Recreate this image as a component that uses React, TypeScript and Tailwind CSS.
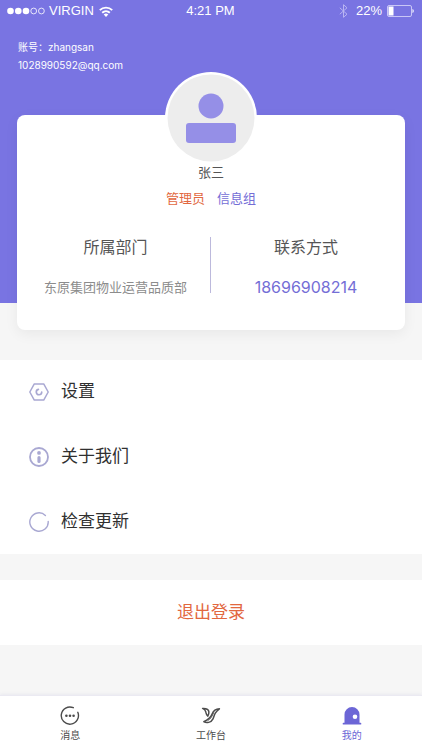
import type { ReactNode } from 'react'

interface MenuEntry {
  label: string
  icon: ReactNode
}

interface TabEntry {
  label: string
  icon: ReactNode
  active?: boolean
}

function SettingsIcon() {
  return (
    <svg viewBox="0 0 20 20" className="size-5" fill="none" stroke="#a9a8d2" strokeWidth="1.5" strokeLinejoin="round" strokeLinecap="round" aria-hidden="true">
      <path d="M5.3 1.9h9.4L19.2 10l-4.5 8.1H5.3L.8 10z" />
      <path d="M9.4 7.4a2.7 2.7 0 1 0 3.3 2.8" strokeWidth="1.7" />
    </svg>
  )
}

function AboutIcon() {
  return (
    <svg viewBox="0 0 20 20" className="size-5" fill="none" stroke="#a9a8d2" aria-hidden="true">
      <circle cx="10" cy="10" r="9" strokeWidth="1.8" />
      <circle cx="10" cy="5.9" r="1.9" fill="#a9a8d2" stroke="none" />
      <path d="M10 10.7v3.8" strokeWidth="3.2" strokeLinecap="round" />
    </svg>
  )
}

function UpdateIcon() {
  return (
    <svg viewBox="0 0 20 20" className="size-5" fill="none" stroke="#a9a8d2" strokeWidth="1.4" strokeLinecap="round" aria-hidden="true">
      <path d="M16.4 3.4A9.2 9.2 0 1 0 19.2 9.4" />
    </svg>
  )
}

function MessageIcon() {
  return (
    <svg viewBox="0 0 20 20" className="size-5" fill="none" stroke="#4c4c4c" strokeWidth="1.4" strokeLinecap="round" aria-hidden="true">
      <path d="M13.3 1.7A8.6 8.6 0 1 0 17.8 6.3" />
      <g fill="#4c4c4c" stroke="none">
        <circle cx="6.4" cy="9.8" r="1.3" />
        <circle cx="10" cy="9.8" r="1.3" />
        <circle cx="13.6" cy="9.8" r="1.3" />
      </g>
    </svg>
  )
}

function WorkbenchIcon() {
  return (
    <svg viewBox="0 0 20 20" className="size-5" fill="none" stroke="#4c4c4c" strokeWidth="1.5" strokeLinecap="round" strokeLinejoin="round" aria-hidden="true">
      <path d="M1.6 2.4c3.8-.2 6 .9 6.300 3.400.1 1.600-.3 2.900-1.100 4.300C5.200 8.900 5.300 7.700 4.900 6.200 4.500 4.500 3.400 3.200 1.600 2.400z" />
      <path d="M18.400 2.800c-4 .1-5.900 1.700-7.300 5.200-1.200 3.100-3.200 5.400-8.300 7.700 2.600 1.700 7.200 1.100 9.200-2.900 1-2 1.100-3.700 2.300-5.700.9-1.500 2.200-2.900 4.100-4.300z" />
      <path d="M12.600 6.800c-1.500 3.400-2.500 5.700-5.600 7.700" strokeWidth=".9" />
    </svg>
  )
}

function MineIcon() {
  return (
    <svg viewBox="0 0 20 20" className="size-5" aria-hidden="true">
      <path d="M2.5 17V8.5a7.5 7.5 0 0 1 15 0V17z" fill="#6c66d6" />
      <path d="M1.5 17.7h17" stroke="#6c66d6" strokeWidth="1.7" strokeLinecap="round" />
      <circle cx="13" cy="10.800" r="2.300" fill="#fff" />
    </svg>
  )
}

const menuEntries: MenuEntry[] = [
  { label: '设置', icon: <SettingsIcon /> },
  { label: '关于我们', icon: <AboutIcon /> },
  { label: '检查更新', icon: <UpdateIcon /> },
]

const tabs: TabEntry[] = [
  { label: '消息', icon: <MessageIcon /> },
  { label: '工作台', icon: <WorkbenchIcon /> },
  { label: '我的', icon: <MineIcon />, active: true },
]

function StatusBar() {
  return (
    <div className="grid grid-cols-[1fr_auto_1fr] items-center h-[22px] pl-[7px] pr-2 font-['Liberation_Sans',sans-serif] text-[13px]">
      <div className="flex items-center">
        <svg viewBox="0 0 38 8" className="w-[38px] h-2 mr-1" fill="#fff" stroke="#fff" aria-hidden="true">
          <circle cx="3.5" cy="4" r="3.3" stroke="none" />
          <circle cx="11.3" cy="4" r="3.3" stroke="none" />
          <circle cx="19" cy="4" r="3.3" stroke="none" />
          <circle cx="26.7" cy="4" r="2.9" fill="none" strokeWidth=".8" />
          <circle cx="34.4" cy="4" r="2.9" fill="none" strokeWidth=".8" />
        </svg>
        <span>VIRGIN</span>
        <svg viewBox="0 0 14 11" className="w-3.5 h-[11px] ml-[5px]" fill="none" stroke="#fff" strokeWidth="1.9" aria-hidden="true">
          <path d="M.8 4.1a8.9 8.9 0 0 1 12.4 0M3.2 6.7a5.5 5.5 0 0 1 7.6 0" />
          <path d="M7 10.9 4.7 8.6a3.2 3.2 0 0 1 4.6 0z" fill="#fff" stroke="none" />
        </svg>
      </div>
      <span>4:21 PM</span>
      <div className="flex items-center justify-end">
        <svg viewBox="0 0 9 14" className="w-[9px] h-3.5 mr-2" fill="none" stroke="#b9b5f2" strokeWidth="1" aria-hidden="true">
          <path d="M.8 3.8 8 10.2 4.5 13.3V.7L8 3.8.8 10.2" />
        </svg>
        <span>22%</span>
        <svg viewBox="0 0 28 12" className="w-7 h-3 ml-1" aria-hidden="true">
          <rect x="1.5" y=".5" width="24" height="11" rx="1.5" fill="none" stroke="#c9c6f6" />
          <rect x="2.5" y="1.5" width="5" height="9" fill="#fff" />
          <path d="M26.5 4v4c1.6-.5 1.6-3.5 0-4z" fill="#fff" />
        </svg>
      </div>
    </div>
  )
}

function Avatar() {
  return (
    <svg viewBox="0 0 92 92" className="size-[92px]" role="img" aria-label="张三">
      <circle cx="46" cy="46" r="46" fill="#fff" />
      <circle cx="46" cy="46" r="43.5" fill="#ededed" />
      <circle cx="46" cy="34" r="12.5" fill="#958fe7" />
      <rect x="21" y="51" width="50" height="20" rx="3" fill="#958fe7" />
    </svg>
  )
}

function ProfileCard() {
  return (
    <section className="-mt-[188px] mx-[17px] pt-px pb-[33px] rounded-lg bg-white shadow-[0_4px_14px_rgba(0,0,0,0.06)]">
      {/* avatar hangs over the top edge of the card */}
      <div className="flex flex-col items-center -mt-11">
        <Avatar />
        <h1 className="text-[13px] leading-4 text-[#555]">张三</h1>
        <p className="flex gap-3 mt-2 text-[13px] leading-5">
          <span className="text-[#e2683f]">管理员</span>
          <span className="text-[#746ed6]">信息组</span>
        </p>
      </div>
      <dl className="grid grid-cols-2 mt-[29px] px-1 text-center">
        <div className="h-14 border-r border-[#bcb9dc]">
          <dt className="text-base leading-5 text-[#555]">所属部门</dt>
          <dd className="mt-5 text-[13px] leading-5 text-[#8c8c8c]">东原集团物业运营品质部</dd>
        </div>
        <div>
          <dt className="text-base leading-5 text-[#555]">联系方式</dt>
          <dd className="mt-5 text-base leading-5 text-[#746ed6]">18696908214</dd>
        </div>
      </dl>
    </section>
  )
}

export default function App() {
  return (
    <div className="flex flex-col min-h-screen bg-[#f6f6f6] font-['Inter','Noto_Sans_CJK_SC',sans-serif]">
      <header className="h-[303px] bg-[#7974e2] text-white">
        <StatusBar />
        <div className="mt-4 pl-[18px] text-[10px] leading-[18px]">
          <p>账号：zhangsan</p>
          <p>1028990592@qq.com</p>
        </div>
      </header>

      <main className="flex-1">
        <ProfileCard />

        <ul className="flex flex-col gap-px mt-[30px] bg-white">
          {menuEntries.map(entry => (
            <li key={entry.label}>
              <button type="button" className="flex items-center gap-3 w-full h-16 px-[29px] text-[17px] text-[#303030]">
                {entry.icon}
                {entry.label}
              </button>
            </li>
          ))}
        </ul>

        <button type="button" className="block w-full h-[65px] mt-[26px] bg-white text-[17px] text-[#e2683f]">
          退出登录
        </button>
      </main>

      <nav className="grid grid-cols-3 bg-white border-t border-[#ebeaf2] shadow-[0_-1px_3px_rgba(90,85,160,0.08)]">
        {tabs.map(tab => (
          <a
            key={tab.label}
            href="#"
            aria-current={tab.active ? 'page' : undefined}
            className={`flex flex-col items-center gap-0.5 pt-2.5 pb-2 text-[10px] leading-[14px] ${tab.active ? 'text-[#6c66d6]' : 'text-[#4c4c4c]'}`}
          >
            {tab.icon}
            {tab.label}
          </a>
        ))}
      </nav>
    </div>
  )
}
